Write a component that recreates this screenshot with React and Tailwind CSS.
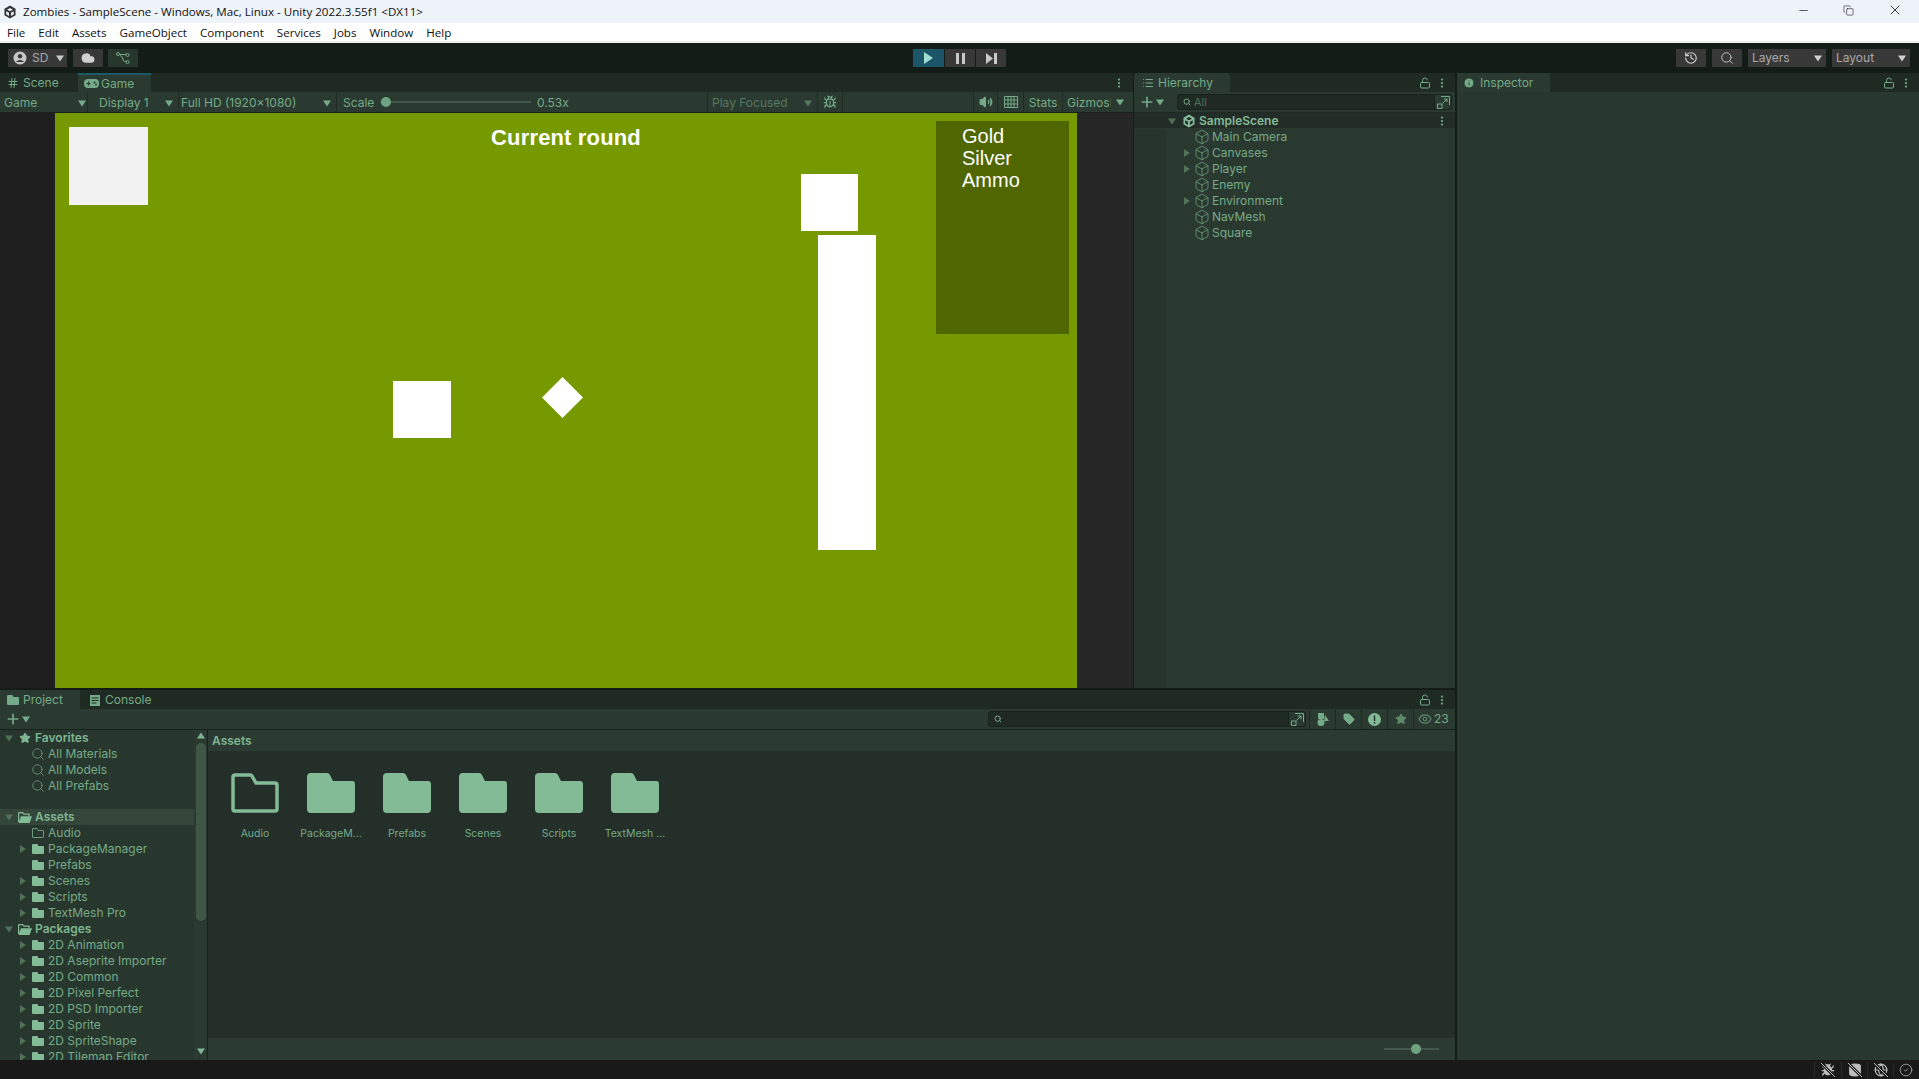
import { Box, Bug, EllipsisVertical, Eye, Hash, History, List, LockOpen, Plus, Search, Star, Tag, Volume2, Cloud, Minus, X, Copy, Info, CircleCheck, Database, Globe } from 'lucide-react';

const text = 'text-[#75aa88]';
const font = { fontFamily: 'Inter, sans-serif' };

function Caret({ right, className = '' }) {
  return (
    <svg width="8" height="8" viewBox="0 0 8 8" className={`shrink-0 ${className}`} fill="currentColor">
      {right ? <path d="M1 0L7 4L1 8Z" /> : <path d="M0 1.5H8L4 7.5Z" />}
    </svg>
  );
}

function UnityLogo({ size = 14 }) {
  return (
    <svg width={size} height={size} viewBox="0 0 24 24" fill="currentColor">
      <path d="M12 1L21.5 6.5V17.5L12 23L2.5 17.5V6.5ZM12 5L7 8L12 10.7L17 8ZM5.5 10.5V16L10.3 18.8V13.3ZM18.5 10.5L13.7 13.3V18.8L18.5 16Z" />
    </svg>
  );
}

function FolderFill({ className = '' }) {
  return (
    <svg viewBox="0 0 48 40" className={className} fill="currentColor">
      <path d="M4 0H20Q22 0 23 2L26 8H45Q48 8 48 11V36Q48 40 44 40H4Q0 40 0 36V4Q0 0 4 0Z" />
    </svg>
  );
}

function FolderLine({ className = '' }) {
  return (
    <svg viewBox="0 0 48 40" className={className} fill="none" stroke="currentColor" strokeWidth="3.5">
      <path d="M4 2H19Q20.5 2 21 3L25 10H44Q46 10 46 12V36Q46 38 44 38H4Q2 38 2 36V4Q2 2 4 2Z" />
    </svg>
  );
}

function FolderOpenIcon() {
  return (
    <svg width="14" height="11" viewBox="0 0 14 11" className="text-[#84bb97]">
      <path d="M.6 10V1.2Q.6.6 1.2.6H4.6L6 2.2H11V4" fill="none" stroke="currentColor" strokeWidth="1.2" />
      <path d="M3 4.2H14L11.6 11H1Q.5 11 .8 10Z" fill="currentColor" />
    </svg>
  );
}

function Slashed({ children }) {
  return (
    <div className="relative w-[16px] h-[16px] flex items-center justify-center">
      {children}
      <svg width="16" height="16" viewBox="0 0 16 16" className="absolute inset-0">
        <path d="M1 1L15 15" stroke="#191919" strokeWidth="3" />
        <path d="M1 1L15 15" stroke="#bdbdbd" strokeWidth="1" />
      </svg>
    </div>
  );
}

function StopButton({ children, active }) {
  return (
    <div className={`h-[18px] flex items-center justify-center text-[#c9c9c9] ${active ? 'w-[31px] bg-[#1c5468]' : 'w-[30px] bg-[#383838]'}`}>
      {children}
    </div>
  );
}

function DarkButton({ className = '', children }) {
  return <div className={`h-[18px] flex items-center bg-[#383838] text-[#a8a8a8] ${className}`}>{children}</div>;
}

function Kebab() {
  return <EllipsisVertical size={12} strokeWidth={2.5} className="text-[#75aa88]" />;
}

function PanelTools() {
  return (
    <div className="ml-auto flex items-center gap-[5px] pr-[7px] text-[#75aa88]">
      <LockOpen size={12} />
      <Kebab />
    </div>
  );
}

function GameToolbar() {
  return (
    <div className={`h-[21px] flex items-center bg-[#2a3a30] border-b border-[#18211b] text-[12px] whitespace-nowrap ${text}`}>
      <div className="w-[88px] shrink-0 flex items-center justify-between pl-[4px] pr-[1px] pt-px h-full border-r border-[#1f2a23]">Game<Caret /></div>
      <div className="w-[90px] shrink-0 ml-px flex items-center justify-between pl-[10px] pr-[5px] pt-px h-full border-r border-[#1f2a23]">Display 1<Caret /></div>
      <div className="w-[158px] shrink-0 flex items-center justify-between pl-[2px] pr-[5px] pt-px h-full border-r border-[#1f2a23]">Full HD (1920x1080)<Caret /></div>
      <span className="ml-[6px] w-[37px] shrink-0 pt-px">Scale</span>
      <div className="relative w-[151px] shrink-0 h-[2px] bg-[#42594a]">
        <div className="absolute left-[1px] -top-[4px] w-[10px] h-[10px] rounded-full bg-[#6ea382]" />
      </div>
      <span className="ml-[6px] w-[32px] shrink-0 pt-px">0.53x</span>
      <div className="ml-[138px] w-[111px] shrink-0 h-full flex items-center justify-between pl-[4px] pr-[5px] pt-px border-l border-r border-[#1f2a23] text-[#547760]">
        Play Focused<Caret />
      </div>
      <div className="w-[25px] shrink-0 h-full flex items-center justify-center border-r border-[#1f2a23]"><Bug size={14} /></div>
      <div className="ml-[130px] w-[25px] shrink-0 h-full flex items-center justify-center border-l border-r border-[#1f2a23]"><Volume2 size={14} fill="currentColor" /></div>
      <div className="w-[26px] shrink-0 h-full flex items-center justify-center border-r border-[#1f2a23]">
        <svg width="14" height="12" viewBox="0 0 14 12" fill="none" stroke="currentColor"><path d="M.5.5H13.5V11.5H.5ZM.5 4H13.5M.5 8H13.5M4 .5V11.5M7 .5V11.5M10 .5V11.5" /></svg>
      </div>
      <div className="w-[39px] shrink-0 h-full flex items-center justify-center pt-px border-r border-[#1f2a23]">Stats</div>
      <div className="pl-[4px] pt-px w-[47px] shrink-0">Gizmos</div>
      <div className="w-[19px] shrink-0 flex justify-center border-l border-[#3a4f42]"><Caret /></div>
    </div>
  );
}

function GameCanvas() {
  return (
    <div className="relative w-[1022px] h-full bg-[#779900] overflow-hidden">
      <div className="absolute left-[14px] top-[14px] w-[79px] h-[78px] bg-[#f2f2f2]" />
      <div className="absolute left-[746px] top-[61px] w-[57px] h-[57px] bg-white" />
      <div className="absolute left-[763px] top-[122px] w-[58px] h-[315px] bg-white" />
      <div className="absolute left-[338px] top-[268px] w-[58px] h-[57px] bg-white" />
      <div className="absolute left-[493px] top-[270px] w-[29px] h-[29px] bg-white rotate-45" />
      <div className="absolute left-[881px] top-[8px] w-[133px] h-[213px] bg-[#506600] pl-[26px] pt-[4px] text-white text-[20px] leading-[22px]" style={{ fontFamily: '"Liberation Sans", sans-serif' }}>
        <div>Gold</div>
        <div>Silver</div>
        <div>Ammo</div>
      </div>
      <div className="absolute left-0 right-0 top-[12px] text-center text-white text-[22px] leading-[26px] tracking-[0.15px] font-bold" style={{ fontFamily: '"Liberation Sans", sans-serif' }}>Current round</div>
    </div>
  );
}

function GamePanel() {
  return (
    <div className="w-[1133px] h-full flex flex-col bg-[#1f2a23]">
      <div className={`h-[19px] flex items-stretch text-[12px] ${text}`}>
        <div className="w-[78px] flex items-center pl-[7px] pt-px gap-[4px]"><Hash size={12} />Scene</div>
        <div className="w-[73px] flex items-center pl-[6px] gap-[2px] bg-[#2a3a30] border-t-2 border-[#1d5a68]">
          <svg width="15" height="9" viewBox="0 0 15 9"><rect width="15" height="9" rx="4" fill="currentColor" /><rect x="2.5" y="4" width="4" height="1.2" fill="#2a3a30" /><rect x="4" y="2.5" width="1.2" height="4" fill="#2a3a30" /><circle cx="10.5" cy="3.5" r="1" fill="#2a3a30" /><circle cx="12" cy="5.5" r="1" fill="#2a3a30" /></svg>
          Game
        </div>
        <div className="ml-auto flex items-center pr-[8px]"><Kebab /></div>
      </div>
      <GameToolbar />
      <div className="flex-1 flex min-h-0 bg-[#262626]">
        <div className="w-[55px] bg-[#1f1f1f]" />
        <GameCanvas />
      </div>
    </div>
  );
}

function SearchField({ className = '', hint }) {
  return (
    <div className={`h-[16px] shrink-0 flex items-center rounded-[3px] bg-[#1f2a23] border border-[#18211b] ${className}`}>
      <Search size={8} className={`ml-[5px] ${text}`} strokeWidth={3} />
      {hint && <span className="ml-[3px] text-[11px] text-[#4f7059]">{hint}</span>}
      <div className="ml-auto w-[17px] h-full flex items-center justify-center bg-[#2a3a30] border-l border-[#18211b] rounded-r-[3px]">
        <svg width="13" height="13" viewBox="0 0 13 13" fill="none" stroke="#75aa88"><path d="M4 .5H12.5V9M.5 8H5V12.5H.5ZM5.5 7.5L10 3M7 3H10V6" /></svg>
      </div>
    </div>
  );
}

const sceneItems = [
  ['Main Camera'],
  ['Canvases', true],
  ['Player', true],
  ['Enemy'],
  ['Environment', true],
  ['NavMesh'],
  ['Square'],
];

function HierarchyPanel() {
  return (
    <div className="w-[321px] h-full flex flex-col bg-[linear-gradient(90deg,#26342b_32px,#2a392f_32px)] text-[12px]">
      <div className={`h-[19px] shrink-0 flex bg-[#1f2a23] ${text}`}>
        <div className="w-[96px] bg-[#2a3a30] rounded-t-[2px] flex items-center pl-[8px] pt-px gap-[4px]"><List size={12} />Hierarchy</div>
        <PanelTools />
      </div>
      <div className={`h-[21px] shrink-0 flex items-center bg-[#2a3a30] border-b border-[#1f2a23] ${text}`}>
        <Plus size={16} strokeWidth={2.5} className="ml-[5px] shrink-0" />
        <Caret className="ml-[1px]" />
        <SearchField hint="All" className="ml-[13px] w-[275px]" />
      </div>
      <div className="h-[16px] shrink-0 flex items-center bg-[#212d26] border-b border-[#2a3a30] font-semibold text-[#86bb99]">
        <Caret className="ml-[34px] text-[#4f7059]" />
        <span className="ml-[6px]"><UnityLogo size={14} /></span>
        <span className="ml-[3px]">SampleScene</span>
        <div className="ml-auto pr-[7px]"><Kebab /></div>
      </div>
      {sceneItems.map(([name, open]) => (
        <div key={name} className={`h-[16px] shrink-0 flex items-center ${text}`}>
          <div className="w-[60px] flex justify-end pr-[3px]">
            {open && <Caret right className="text-[#4f7059]" />}
          </div>
          <Box size={16} strokeWidth={1.1} />
          <span className="ml-[2px]">{name}</span>
        </div>
      ))}
    </div>
  );
}

const assetsTree = [
  ['Audio', false, true],
  ['PackageManager', true],
  ['Prefabs', false],
  ['Scenes', true],
  ['Scripts', true],
  ['TextMesh Pro', true],
];

const packagesTree = ['2D Animation', '2D Aseprite Importer', '2D Common', '2D Pixel Perfect', '2D PSD Importer', '2D Sprite', '2D SpriteShape', '2D Tilemap Editor'];

function TreeFolder({ name, arrow, line }) {
  return (
    <div className={`h-[16px] shrink-0 flex items-center ${text}`}>
      <div className="w-[32px] pl-[19px]">{arrow && <Caret right className="text-[#4f7059]" />}</div>
      {line ? <FolderLine className="w-[12px] h-[10px]" /> : <FolderFill className="w-[12px] h-[10px] text-[#84bb97]" />}
      <span className="ml-[4px] whitespace-nowrap">{name}</span>
    </div>
  );
}

function TreeHead({ name, icon, bg }) {
  return (
    <div className={`h-[16px] shrink-0 flex items-center font-semibold text-[#7fb592] ${bg ? 'bg-[#344639]' : ''}`}>
      <Caret className="ml-[5px] text-[#4f7059]" />
      <span className="ml-[5px] w-[14px] flex justify-center">{icon}</span>
      <span className="ml-[3px]">{name}</span>
    </div>
  );
}

function SavedSearch({ name }) {
  return (
    <div className={`h-[16px] shrink-0 flex items-center pl-[31px] ${text}`}>
      <Search size={14} strokeWidth={1.2} />
      <span className="ml-[3px]">{name}</span>
    </div>
  );
}

function ProjectTree() {
  return (
    <div className="w-[208px] shrink-0 flex bg-[#28372d] border-r border-[#18211b] h-full text-[12px] overflow-hidden">
      <div className="w-[194px] flex flex-col overflow-hidden">
        <TreeHead name="Favorites" icon={<Star size={12} fill="currentColor" />} />
        <SavedSearch name="All Materials" />
        <SavedSearch name="All Models" />
        <SavedSearch name="All Prefabs" />
        <div className="h-[15px] shrink-0" />
        <TreeHead name="Assets" bg icon={<FolderOpenIcon />} />
        {assetsTree.map(([name, arrow, line]) => <TreeFolder key={name} name={name} arrow={arrow} line={line} />)}
        <TreeHead name="Packages" icon={<FolderOpenIcon />} />
        {packagesTree.map((name) => <TreeFolder key={name} name={name} arrow />)}
      </div>
      <div className="w-[13px] flex flex-col items-center text-[#7fb592] bg-[#2a3a30]">
        <Caret className="mt-[2px] rotate-180" />
        <div className="mt-[3px] w-[10px] h-[178px] rounded-full bg-[#3f5647]" />
        <Caret className="mt-auto mb-[5px]" />
      </div>
    </div>
  );
}

const assetFolders = ['Audio', 'PackageM...', 'Prefabs', 'Scenes', 'Scripts', 'TextMesh ...'];

function AssetGrid() {
  return (
    <div className="flex-1 bg-[#232f28] flex pl-[19px] pt-[22px]">
      {assetFolders.map((name, i) => (
        <div key={name} className="w-[76px] flex flex-col">
          {i === 0
            ? <FolderLine className="w-[48px] h-[40px] text-[#84bb97] ml-[4px]" />
            : <FolderFill className="w-[48px] h-[40px] text-[#84bb97] ml-[4px]" />}
          <div className={`mt-[13px] w-[56px] flex justify-center text-[10.5px] whitespace-nowrap ${text}`}>{name}</div>
        </div>
      ))}
    </div>
  );
}

function ProjectPanel() {
  const toolCell = 'w-[26px] h-full flex items-center justify-center border-r border-[#1f2a23]';
  return (
    <div className="h-[370px] flex flex-col text-[12px]">
      <div className={`h-[19px] shrink-0 flex bg-[#1f2a23] ${text}`}>
        <div className="w-[80px] bg-[#2a3a30] flex items-center pl-[7px] pt-px gap-[4px]"><FolderFill className="w-[12px] h-[10px]" />Project</div>
        <div className="flex items-center pl-[10px] pt-px gap-[5px]">
          <svg width="10" height="11" viewBox="0 0 10 11"><rect width="10" height="11" fill="currentColor" /><path d="M1.5 3H8.5M1.5 5.5H8.5M1.5 8H6.5" stroke="#1f2a23" /></svg>
          Console
        </div>
        <PanelTools />
      </div>
      <div className={`h-[21px] shrink-0 flex items-center bg-[#2a3a30] border-b border-[#18211b] ${text}`}>
        <Plus size={16} strokeWidth={2.5} className="ml-[5px] shrink-0" />
        <Caret className="ml-[1px]" />
        <SearchField className="ml-[958px] w-[318px]" />
        <div className="ml-[3px] h-full flex border-l border-[#1f2a23]">
          <div className={toolCell}>
            <svg width="12" height="13" viewBox="0 0 12 13" fill="currentColor"><rect x="1" y="0" width="6" height="6" /><circle cx="4" cy="9.5" r="3.5" /><path d="M8 2L12 8H7Z" /></svg>
          </div>
          <div className={toolCell}><Tag size={12} fill="currentColor" /></div>
          <div className={toolCell}>
            <svg width="13" height="13" viewBox="0 0 13 13"><circle cx="6.5" cy="6.5" r="6.5" fill="#84bb97" /><rect x="5.7" y="2.5" width="1.6" height="5.5" fill="#2a3a30" /><rect x="5.7" y="9" width="1.6" height="1.6" fill="#2a3a30" /></svg>
          </div>
          <div className={`${toolCell} text-[#5d8a6d]`}><Star size={12} fill="currentColor" /></div>
          <div className="w-[40px] flex items-center pl-[4px] gap-[2px] text-[#5d8a6d]"><Eye size={14} /><span className="text-[12px] text-[#75aa88]">23</span></div>
        </div>
      </div>
      <div className="flex-1 flex min-h-0">
        <ProjectTree />
        <div className="flex-1 flex flex-col">
          <div className="h-[21px] shrink-0 flex items-center pl-[4px] bg-[#2c3b31] font-semibold text-[#7fb592]">Assets</div>
          <AssetGrid />
          <div className="h-[22px] shrink-0 bg-[#2c3b31] flex items-center justify-end pr-[16px]">
            <div className="relative w-[55px] h-[2px] bg-[#42594a]">
              <div className="absolute left-[27px] -top-[4px] w-[10px] h-[10px] rounded-full bg-[#6ea382]" />
            </div>
          </div>
        </div>
      </div>
    </div>
  );
}

function InspectorPanel() {
  return (
    <div className="w-[462px] h-full flex flex-col bg-[#29382e] text-[12px]">
      <div className={`h-[19px] flex bg-[#1f2a23] ${text}`}>
        <div className="w-[93px] bg-[#2a3a30] flex items-center pl-[6px] pt-px gap-[5px]">
          <Info size={12} fill="#75aa88" stroke="#2a3a30" />Inspector
        </div>
        <PanelTools />
      </div>
    </div>
  );
}

export default function App() {
  return (
    <div className="w-[1919px] h-[1079px] overflow-hidden flex flex-col bg-[#141414]" style={font}>
      <div className="h-[23px] shrink-0 flex items-center bg-[#eef2f9] text-[#111] text-[11.6px]" style={{ fontFamily: '"Open Sans", sans-serif' }}>
        <div className="ml-[3px] w-[14px] h-[14px] text-[#333] flex items-center"><UnityLogo size={14} /></div>
        <span className="ml-[6px]">Zombies - SampleScene - Windows, Mac, Linux - Unity 2022.3.55f1 &lt;DX11&gt;</span>
        <div className="ml-auto flex items-center pb-[3px] text-[#111]">
          <Minus size={13} strokeWidth={1.25} className="mr-[33px]" />
          <Copy size={11} strokeWidth={1.25} className="mr-[33px]" />
          <X size={16} strokeWidth={1.25} className="mr-[16px]" />
        </div>
      </div>
      <div className="h-[20px] shrink-0 flex items-start pl-[7px] pt-[1px] gap-[13px] bg-white border-b-2 border-[#f0f0f0] text-[11.6px] text-[#111]" style={{ fontFamily: '"Open Sans", sans-serif' }}>
        {['File', 'Edit', 'Assets', 'GameObject', 'Component', 'Services', 'Jobs', 'Window', 'Help'].map((item) => (
          <span key={item}>{item}</span>
        ))}
      </div>
      <div className="h-[30px] shrink-0 flex items-center pl-[8px] pr-[9px] bg-[#141c17]">
        <DarkButton className="w-[59px] pl-[5px] gap-[5px] text-[12px]">
          <svg width="14" height="14" viewBox="0 0 14 14"><circle cx="7" cy="7" r="6.5" fill="#c8c8c8" /><circle cx="7" cy="5.2" r="2.2" fill="#383838" /><path d="M2.8 11Q7 6.8 11.2 11Z" fill="#383838" /></svg>
          SD<Caret className="ml-[3px] text-[#c8c8c8]" />
        </DarkButton>
        <DarkButton className="ml-[6px] w-[30px] justify-center text-[#d0d0d0]"><Cloud size={14} fill="currentColor" /></DarkButton>
        <div className="ml-[5px] w-[30px] h-[18px] flex items-center justify-center bg-[#28372d] text-[#75aa88]">
          <svg width="14" height="12" viewBox="0 0 14 12" fill="none" stroke="currentColor"><circle cx="2" cy="2" r="1.5" /><circle cx="11.5" cy="3" r="1.5" /><circle cx="11.5" cy="10" r="1.5" /><path d="M3.5 2.5H10M4 3.5Q6 4 6.5 6Q7 9.5 10 10" /></svg>
        </div>
        <div className="ml-[775px] flex gap-px">
          <StopButton active><svg width="11" height="12" viewBox="0 0 11 12" fill="#9fdcd0"><path d="M1 0L10 6L1 12Z" /></svg></StopButton>
          <StopButton><svg width="9" height="11" viewBox="0 0 9 11" fill="currentColor"><rect width="3" height="11" /><rect x="6" width="3" height="11" /></svg></StopButton>
          <StopButton><svg width="11" height="11" viewBox="0 0 11 11" fill="currentColor"><path d="M0 0L7 5.5L0 11Z" /><rect x="8" width="3" height="11" /></svg></StopButton>
        </div>
        <div className="ml-auto flex items-center gap-[6px] text-[12px]">
          <DarkButton className="w-[30px] justify-center text-[#d0d0d0]"><History size={14} /></DarkButton>
          <DarkButton className="w-[30px] justify-center text-[#d0d0d0]"><Search size={14} strokeWidth={1.5} /></DarkButton>
          <DarkButton className="w-[78px] justify-between pl-[4px] pr-[4px]">Layers<Caret className="text-[#d0d0d0]" /></DarkButton>
          <DarkButton className="w-[78px] justify-between pl-[4px] pr-[4px]">Layout<Caret className="text-[#d0d0d0]" /></DarkButton>
        </div>
      </div>
      <div className="flex-1 flex min-h-0 bg-[#141c17]">
        <div className="w-[1455px] flex flex-col">
          <div className="h-[615px] flex gap-px">
            <GamePanel />
            <HierarchyPanel />
          </div>
          <div className="h-[2px]" />
          <ProjectPanel />
        </div>
        <div className="w-[2px]" />
        <InspectorPanel />
      </div>
      <div className="h-[19px] shrink-0 flex items-center justify-end bg-[#191919] text-[#bdbdbd]">
        <div className="w-[27px] flex justify-center border-l border-[#2a2a2a]"><Slashed><Bug size={14} fill="currentColor" /></Slashed></div>
        <div className="w-[26px] flex justify-center border-l border-[#2a2a2a]"><Slashed><Database size={14} fill="currentColor" /></Slashed></div>
        <div className="w-[26px] flex justify-center border-l border-[#2a2a2a]"><Slashed><Globe size={14} /></Slashed></div>
        <div className="w-[26px] flex justify-center border-l border-[#2a2a2a] pr-[2px]"><CircleCheck size={14} strokeWidth={1.25} /></div>
      </div>
    </div>
  );
}
